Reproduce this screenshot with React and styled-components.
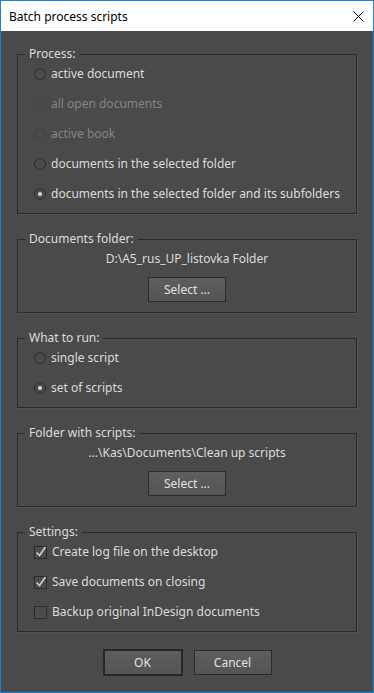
import React from 'react';
import styled, { createGlobalStyle } from 'styled-components';

const Global = createGlobalStyle`
  html, body { margin: 0; padding: 0; background: #ffffff; }
  body { font-family: "Noto Sans", "Liberation Sans", Arial, sans-serif; }
  * { box-sizing: border-box; }
`;

const Window = styled.div`
  width: 374px;
  height: 693px;
  border: 1px solid #1883d7;
  display: flex;
  flex-direction: column;
  background: #4a4a4a;
`;

const TitleBar = styled.div`
  height: 30px;
  flex: none;
  background: #ffffff;
  display: flex;
  align-items: center;
  justify-content: space-between;
  padding: 0 9px 0 8px;
  font-size: 12px;
  color: #000000;
`;

const Body = styled.div`
  flex: 1;
  display: flex;
  flex-direction: column;
  gap: 17px;
  padding: 15px 16px 0;
`;

const Panel = styled.fieldset`
  margin: 0;
  padding: 0;
  min-width: 0;
  border: 1px solid #2a2a2a;
  box-shadow: 1px 1px 0 rgba(255, 255, 255, 0.05);
`;

const Legend = styled.legend`
  margin-left: 7px;
  padding: 0 4px;
  font-size: 12px;
  line-height: 16px;
  color: #dcdcdc;
`;

const Options = styled.div`
  display: flex;
  flex-direction: column;
  gap: 14px;
  padding: 4px 16px 11px;
`;

const Centered = styled.div`
  display: flex;
  flex-direction: column;
  align-items: center;
  gap: 10px;
  padding: 4px 0 10px;
`;

const PathText = styled.div`
  font-size: 12px;
  line-height: 16px;
  color: #dcdcdc;
`;

const Row = styled.label`
  display: flex;
  align-items: center;
  gap: 5px;
  height: 16px;
  font-size: 12px;
  line-height: 16px;
  color: ${p => (p.$disabled ? '#858585' : '#dcdcdc')};
`;

const RadioMark = styled.span`
  position: relative;
  flex: none;
  width: 12px;
  height: 12px;
  border-radius: 50%;
  border: 1px solid ${p => (p.$disabled ? '#404040' : '#2c2c2c')};
  background: ${p => (p.$disabled ? '#4a4a4a' : 'linear-gradient(#484848, #4e4e4e)')};
  &::after {
    content: '';
    display: ${p => (p.$checked ? 'block' : 'none')};
    position: absolute;
    left: 3px;
    top: 3px;
    width: 4px;
    height: 4px;
    border-radius: 50%;
    background: #d8d8d8;
  }
`;

const Actions = styled.div`
  display: flex;
  justify-content: center;
  align-items: center;
  gap: 11px;
`;

const Button = styled.button`
  width: ${p => (p.$default ? '80px' : '78px')};
  height: ${p => (p.$default ? '27px' : '25px')};
  padding: 0;
  border: ${p => (p.$default ? '2px solid #262626' : '1px solid #2b2b2b')};
  background: linear-gradient(#5e5e5e, #545454);
  color: #e0e0e0;
  font-family: "Noto Sans", "Liberation Sans", Arial, sans-serif;
  font-size: 12px;
  cursor: pointer;
`;

const CloseIcon = () => (
  <svg width="11" height="11" viewBox="0 0 11 11">
    <path d="M0.5 0.5 L10.5 10.5 M10.5 0.5 L0.5 10.5" stroke="#000" strokeWidth="1" fill="none" />
  </svg>
);

const CheckMark = ({ checked }) => (
  <svg width="13" height="13" viewBox="0 0 13 13" style={{ flex: 'none', overflow: 'visible' }}>
    <rect x="0.5" y="0.5" width="12" height="12" fill="#4c4c4c" stroke="#2b2b2b" />
    {checked && (
      <path d="M2.5 6.5 L5.5 9.5 L11.5 1" stroke="#cfcfcf" strokeWidth="1.6" fill="none" />
    )}
  </svg>
);

const Radio = ({ label, checked, disabled }) => (
  <Row $disabled={disabled}>
    <RadioMark $checked={checked} $disabled={disabled} />
    {label}
  </Row>
);

const Check = ({ label, checked }) => (
  <Row>
    <CheckMark checked={checked} />
    {label}
  </Row>
);

export default function App() {
  return (
    <>
      <Global />
      <Window>
        <TitleBar>
          <span>Batch process scripts</span>
          <CloseIcon />
        </TitleBar>
        <Body>
          <Panel>
            <Legend>Process:</Legend>
            <Options>
              <Radio label="active document" />
              <Radio label="all open documents" disabled />
              <Radio label="active book" disabled />
              <Radio label="documents in the selected folder" />
              <Radio label="documents in the selected folder and its subfolders" checked />
            </Options>
          </Panel>
          <Panel>
            <Legend>Documents folder:</Legend>
            <Centered>
              <PathText>D:\A5_rus_UP_listovka Folder</PathText>
              <Button>Select ...</Button>
            </Centered>
          </Panel>
          <Panel>
            <Legend>What to run:</Legend>
            <Options>
              <Radio label="single script" />
              <Radio label="set of scripts" checked />
            </Options>
          </Panel>
          <Panel>
            <Legend>Folder with scripts:</Legend>
            <Centered>
              <PathText>...\Kas\Documents\Clean up scripts</PathText>
              <Button>Select ...</Button>
            </Centered>
          </Panel>
          <Panel>
            <Legend>Settings:</Legend>
            <Options>
              <Check label="Create log file on the desktop" checked />
              <Check label="Save documents on closing" checked />
              <Check label="Backup original InDesign documents" />
            </Options>
          </Panel>
          <Actions>
            <Button $default>OK</Button>
            <Button>Cancel</Button>
          </Actions>
        </Body>
      </Window>
    </>
  );
}
